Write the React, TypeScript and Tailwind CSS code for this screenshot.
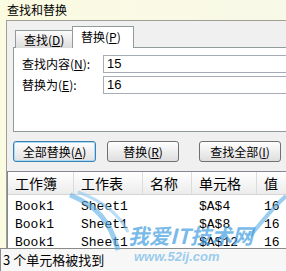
import React from 'react';

export default function App() {
  const rows = [
    ['Book1', 'Sheet1', '', '$A$4', '16'],
    ['Book1', 'Sheet1', '', '$A$8', '16'],
    ['Book1', 'Sheet1', '', '$A$12', '16'],
  ];
  const heads = ['工作簿', '工作表', '名称', '单元格', '值'];
  const cols = ['w-[66px]', 'w-[69px]', 'w-[49px]', 'w-[65px]', 'w-[40px]'];

  return (
    <div className="relative w-[286px] h-[271px] overflow-hidden flex flex-col bg-gradient-to-r from-[#fbfbe2] to-[#f8f8e8] text-black font-['Noto_Sans_CJK_SC','Liberation_Sans',sans-serif]">
      {/* title */}
      <div className="h-[20px] shrink-0 pl-[7px] text-[12px] leading-[20px]">查找和替换</div>

      <div className="flex flex-1 min-h-0">
        <div className="w-[6px] shrink-0" />
        <div className="flex-1 min-w-0 flex flex-col border-l border-t border-[#a0a096] bg-[#f0f0f0]">
          {/* tabs */}
          <div className="relative z-10 flex items-end h-[27px] pl-[8px] -mb-px">
            <div className="w-[57px] h-[18px] border-l border-t border-[#919b9c] bg-gradient-to-b from-[#fcfcfc] to-[#dcdcdc] text-[12px] leading-[17px] pl-[8px]">
              查找(<span className="underline">D</span>)
            </div>
            <div className="w-[62px] h-[22px] border-l border-t border-r border-[#919b9c] bg-white text-[12px] leading-[20px] pl-[8px]">
              替换(<span className="underline">P</span>)
            </div>
          </div>
          <div className="ml-[6px] -mr-[6px] h-[85px] shrink-0 border border-[#919b9c] bg-white pt-[7px] pl-[8px] flex flex-col gap-[3px]">
            <div className="flex items-center h-[18px]">
              <span className="w-[81px] text-[12px] leading-[18px]">查找内容(<span className="underline">N</span>):</span>
              <div className="flex-1 h-[18px] border border-[#a5acb5] pl-[3px] text-[13px] leading-[16px] font-['Liberation_Sans',sans-serif]">15</div>
            </div>
            <div className="flex items-center h-[18px]">
              <span className="w-[81px] text-[12px] leading-[18px]">替换为(<span className="underline">E</span>):</span>
              <div className="flex-1 h-[18px] border border-[#a5acb5] pl-[3px] text-[13px] leading-[16px] font-['Liberation_Sans',sans-serif]">16</div>
            </div>
          </div>

          {/* buttons */}
          <div className="flex mt-[9px] ml-[6px] h-[21px] shrink-0">
            <div className="w-[83px] rounded-[3px] border border-[#3c7fb1] shadow-[inset_0_0_0_1px_#a9dbf6] bg-gradient-to-b from-[#ffffff] to-[#e1e1e1] text-[12px] leading-[19px] text-center">
              全部替换(<span className="underline">A</span>)
            </div>
            <div className="ml-[11px] w-[72px] rounded-[3px] border border-[#707070] bg-gradient-to-b from-[#ffffff] to-[#dedede] text-[12px] leading-[19px] text-center">
              替换(<span className="underline">R</span>)
            </div>
            <div className="ml-[20px] w-[82px] rounded-[3px] border border-[#707070] bg-gradient-to-b from-[#ffffff] to-[#dedede] text-[12px] leading-[19px] text-center">
              查找全部(<span className="underline">I</span>)
            </div>
          </div>

          {/* result list */}
          <div className="mt-[9px] flex-1 min-h-0 overflow-hidden border-l border-t border-[#828790] bg-white">
            <div className="flex h-[23px] border-b border-[#d5d5d5] bg-gradient-to-b from-[#ffffff] to-[#ececec]">
              {heads.map((h, i) => (
                <div key={i} className={`${cols[i]} shrink-0 border-r border-[#dcdcdc] pl-[7px] text-[14px] leading-[22px]`}>
                  {h}
                </div>
              ))}
            </div>
            <div className="pt-[3px]">
              {rows.map((r, ri) => (
                <div key={ri} className="flex h-[18px]">
                  {r.map((c, ci) => (
                    <div key={ci} className={`${cols[ci]} shrink-0 pl-[7px] text-[13px] leading-[18px] font-['Liberation_Mono',monospace]`}>
                      {c}
                    </div>
                  ))}
                </div>
              ))}
            </div>
          </div>
        </div>
      </div>

      {/* status bar */}
      <div className="h-[23px] shrink-0 border-t border-l border-[#8a8a8a] bg-[#f7f7f7] pl-[2px] text-[13px] leading-[21px]">
        3 个单元格被找到
      </div>

      {/* watermark */}
      <svg className="absolute left-0 top-0 pointer-events-none" width="286" height="271" viewBox="0 0 286 271">
        <path d="M70 195 C 95 205, 110 220, 118 250" stroke="#5aaee6" strokeWidth="5" fill="none" opacity="0.6" />
        <path d="M78 192 C 100 200, 118 212, 128 232" stroke="#8cc8ef" strokeWidth="3" fill="none" opacity="0.6" />
        <path d="M250 236 C 262 222, 272 208, 286 196" stroke="#5aaee6" strokeWidth="4" fill="none" opacity="0.6" />
      </svg>
      <div className="absolute left-[128px] top-[223px] text-[21px] leading-[24px] font-bold italic text-[#3d9be0]/70 pointer-events-none">
        我爱IT技术网
      </div>
      <div className="absolute left-[134px] top-[250px] text-[13px] leading-[14px] font-bold italic text-[#5aaee6]/60 font-['Liberation_Sans',sans-serif] pointer-events-none">
        www.52ij.com
      </div>
    </div>
  );
}
